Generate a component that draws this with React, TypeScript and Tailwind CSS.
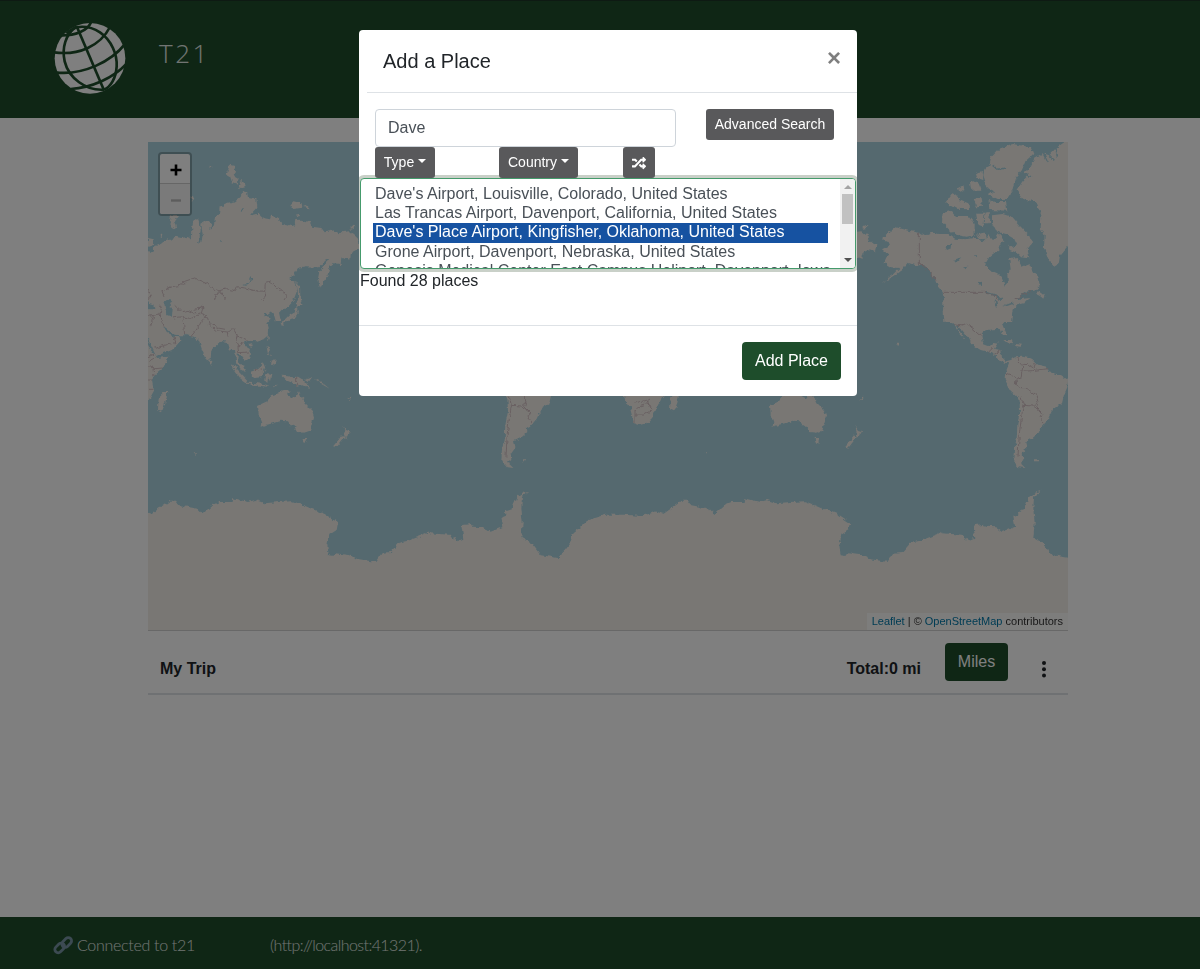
import React from "react";
import { FaRandom } from "react-icons/fa";

const LAND = "#f2efe9";
const SEA = "#aad3df";
const BORDER = "#d3c1c4";

function Globe() {
  return (
    <svg viewBox="162 67 216 216" className="h-[72px] w-[72px]" fill="none" stroke="#1e4d2b" strokeWidth="8">
      <circle cx="270" cy="176" r="106" fill="#fff" stroke="none" />
      <path d="M230 80L312 272" />
      <path d="M230 80C196 104 185 145 194 185C206 235 258 274 312 270" />
      <path d="M200 102C222 74 266 76 300 98C335 122 352 165 350 200C348 235 332 262 312 270" />
      <path d="M182 107C225 108 262 95 274 66" />
      <path d="M162 158C235 168 300 140 330 82" />
      <path d="M166 218C250 228 335 185 376 132" />
      <path d="M212 268C275 265 340 235 380 192" />
    </svg>
  );
}

function World() {
  return (
    <>
      <g transform="scale(.33333)">
        <path fill={LAND} d="M-90 340L0 325L15 330L22 312L40 305L44 298L65 290L82 284L100 288L118 285L132 290L133 250L139 228L155 235L158 262L155 285L150 308L160 300L164 280L160 245L175 236L190 243L187 262L198 250L200 230L213 213L215 196L240 182L262 178L278 165L283 149L298 154L300 168L325 171L328 195L303 222L330 215L345 228L366 232L370 220L378 224L392 226L400 250L414 246L420 254L440 246L442 234L460 233L485 240L492 254L520 258L530 271L560 265L570 277L584 270L604 268L626 286L631 305L608 320L610 336L580 350L578 366L556 364L546 372L538 402L525 420L516 437L510 410L514 390L530 370L544 350L530 357L518 372L500 374L475 373L450 378L438 396L424 411L442 420L448 445L435 478L415 500H-90Z" />
        <path fill={LAND} d="M236 97L244 68L259 72L264 90L258 98L269 105L267 126L252 120L246 103ZM272 128L280 114L293 128L286 138L274 137ZM427 188L436 178L461 184L463 197L436 201ZM465 195L480 190L488 199ZM443 218L453 216L456 222L446 224ZM78 262L65 240L70 218L90 219L78 235L84 258ZM0 288L17 292L18 308L0 314ZM445 418L456 430L457 465L463 486L448 491L450 455ZM608 253L618 248L622 255ZM38 280L44 274L40 292ZM130 160L138 166L132 180ZM180 76L187 74L186 79Z" />
        <path fill={SEA} d="M48 480L65 466L76 480L66 486L74 500L72 524L58 520L52 500ZM-60 480L0 474L4 486L22 492L15 502L-60 500ZM310 405L313 410L300 430L286 432L303 423ZM276 200L285 198L280 208ZM216 293L220 297L217 300Z" />
        <path fill="none" stroke={BORDER} strokeWidth="3" d="M48 462L42 448L70 434L100 430L110 418L140 408L178 424L190 438L215 446L205 458L198 475L165 488L150 500L132 492L110 486L80 490M215 446L235 440L262 446L268 434L290 438L320 446L350 448L354 458L345 474L325 480L300 494L270 488L240 480L225 462L215 446M350 448L352 424L368 420L385 436L418 458L402 484L390 500M0 444L10 460L0 475M78 490L100 510L120 505L140 515L165 488M140 515L128 500M198 475L188 490" />
      </g>
      <g transform="translate(0 158) scale(.33333)">
        <path fill={LAND} d="M-90 0H430L405 25L393 38L398 60L384 66L378 44L370 36L358 46L350 34L346 48L370 52L358 68L363 88L362 104L348 116L326 124L300 122L287 128L300 145L309 158L307 174L292 182L280 166L270 160L268 178L285 198L293 216L280 210L264 186L262 158L254 144L244 152L236 126L222 122L208 136L190 152L188 176L178 184L164 155L154 124L138 110L115 106L94 106L80 104L62 90L46 78L60 102L78 110L96 112L100 122L78 148L24 168L0 118L-90 80Z" />
        <path fill={LAND} d="M-120 90L-15 110L0 140L18 162L24 174L62 170L44 206L18 228L12 240L18 272L-6 315L-21 350L-36 368L-61 375L-78 370L-91 320L-106 295L-120 240ZM32 294L50 276L58 276L52 308L42 334L30 328ZM184 180L193 184L189 194L184 190ZM253 192L275 215L298 240L295 248L278 236L258 208ZM296 248L330 250L362 256L360 260L320 256L298 252ZM308 212L330 205L346 190L352 204L340 232L318 234L308 222ZM355 222L370 224L366 244L360 230L358 246L352 240ZM400 224L420 226L428 232L450 230L466 240L484 260L462 256L446 260L436 250L418 242ZM470 240L490 232L495 236L480 246ZM356 138L366 144L364 158L370 170L360 160ZM370 182L383 178L380 194L370 190ZM358 106L363 110L358 122ZM302 132L312 130L314 138L305 140ZM445 8L458 0L463 10L448 20ZM446 20L450 38L440 54L424 58L408 68L402 76L398 66L412 60L426 46L438 38ZM376 256L390 254L375 262Z" />
        <path fill={LAND} d="M330 315L358 302L372 286L392 280L402 270L426 272L420 286L440 296L450 274L458 290L466 296L472 310L492 330L498 350L486 392L468 398L450 396L438 376L428 376L420 364L398 362L374 370L352 376L338 380L340 366L332 345ZM464 414L478 414L474 428L466 426ZM586 378L594 390L606 394L600 404L594 416L588 404L590 394ZM582 406L590 412L572 434L562 446L556 438L568 424ZM137 460L144 460L142 465ZM598 298L606 292L604 300ZM500 236L520 246L545 266L520 252Z" />
        <path fill={SEA} d="M48 6L65 -6L76 6L66 12L74 26L72 50L58 46L52 26ZM-60 6L0 0L4 12L22 18L15 28L-60 26Z" />
        <path fill="none" stroke={BORDER} strokeWidth="3" d="M0 50L16 46L36 42L40 26L34 14M16 46L8 80M36 42L48 78M24 48L14 66L0 78M75 54L104 50L108 82L110 104M104 50L128 56L160 40L175 46L160 64L150 84L130 108M175 46L185 76L205 92L238 96L240 110M80 16L100 36L120 31L140 41L165 14M160 40L165 22L140 28M238 96L256 86L268 108L262 126L270 140L288 128M268 108L300 122M270 140L272 158L300 156M185 76L190 70L210 84L232 88M20 145L50 136L80 128M78 110L84 130M0 184L20 174M0 200L22 206L44 204M14 200L18 228M0 240L12 240M0 268H16M0 170L20 162M446 230V260M320 212L346 206M-75 370V330L-60 320L-30 300M-75 310L-40 300L-24 330L-50 345L-75 345" />
      </g>
      <g transform="translate(196 0) scale(.33333)">
        <path fill={LAND} d="M84 284L100 268L120 256L165 268L190 272L206 282L230 272L246 276L280 276L300 290L330 292L352 288L382 298L398 280L410 294L424 284L434 304L430 326L414 334L400 344L388 366L396 382L424 394L440 410L446 434L456 424L454 398L464 382L460 352L482 348L498 374L520 366L534 392L546 402L554 430L540 442L500 456L486 472L520 468L505 480L490 484L470 500L465 540H262L260 510L266 480L260 450L246 434L232 402L216 384L202 370L180 370L155 362L140 380L118 398L76 424L112 396L130 378L106 376L86 364L98 338L78 322L102 310L98 300L82 296ZM0 270L24 282L46 302L64 310L60 328L40 322L18 334L16 350L0 344ZM20 252L34 250L32 258L20 260ZM540 456L550 446L566 460L562 470L552 462Z" />
        <path fill={LAND} d="M406 46L430 20L470 6L524 16L532 36L508 58L498 84L476 112L470 144L452 170L424 172L398 160L414 148L394 136L382 100L386 80L400 72ZM268 182L288 154L300 158L310 172L340 184L342 202L300 200ZM260 210L285 204L300 222L336 222L356 246L356 278L332 284L298 278L268 252L258 240ZM342 120L356 118L370 130L376 146L356 146L344 136ZM306 138L322 130L326 144L310 150ZM398 174L416 180L450 180L454 206L400 204ZM354 172L374 168L378 194L362 196ZM360 212L386 212L382 256L366 250ZM408 220L440 216L470 226L494 254L520 282L528 304L514 322L520 346L492 342L462 318L484 310L474 290L450 276L420 268L408 244ZM428 274L446 294L430 306L418 290ZM388 214L402 214L398 244L386 244ZM360 92L380 88L382 114L364 108ZM364 276L384 272L390 290L372 292ZM458 308L472 318L476 330L456 322Z" />
        <path fill={LAND} d="M482 146L498 120L514 102L504 92L522 76L536 48L560 34L580 40L600 18L640 -10H780L740 220L660 280L632 316L612 340L608 366L594 374L576 352L564 316L566 280L554 258L556 220L540 180L498 170Z" />
        <path fill={SEA} d="M265 314L286 304L284 318L270 324ZM292 354L316 346L300 362ZM318 376L334 374L328 382ZM364 416L378 420L378 432L370 430ZM354 340L362 340L358 346Z" />
        <path fill="none" stroke={SEA} strokeWidth="5" d="M392 452L412 458L424 462L446 482M418 476L422 496M428 464L440 474M436 496L462 486M470 486L498 464L516 448L548 444M410 70L424 82L450 78M600 18L604 44M580 40L592 52M562 34L574 60M505 95L528 104" />
        <path fill="none" stroke={BORDER} strokeWidth="3" d="M190 272V366L220 386L240 416M262 451H386L420 462L440 495L462 486L500 460L526 448" />
      </g>
      <g transform="translate(196 158) scale(.33333)">
        <path fill={LAND} d="M262 0H500L470 30L464 52L448 66L440 76L452 106L440 104L434 86L410 88L382 92L376 108L382 132L398 138L412 126L426 128L414 146L436 150L438 172L450 184L464 180L480 172L500 170L528 176L546 194L572 200L578 216L616 226L636 240L634 262L624 284L618 310L592 326L578 356L558 380L548 386L550 396L530 414L510 424L514 440L500 460L502 480L492 488L508 504L488 502L472 482L474 446L482 418L484 376L492 330L490 294L466 274L446 238L448 218L460 190L446 188L428 180L420 168L398 156L374 150L348 134L338 114L318 90L306 76L300 78L326 116L312 104L294 74L272 54L262 28ZM442 120L466 120L472 130L450 126ZM478 132L498 134L494 140L478 138ZM534 478H546V484H534ZM120 126L132 132L126 138ZM16 292L22 290L20 300Z" />
        <path fill="none" stroke={SEA} strokeWidth="5" d="M418 2L422 22M440 20L470 10" />
        <path fill="none" stroke={BORDER} strokeWidth="3" d="M292 74L320 78L334 72L350 84L374 106M398 156L412 142M414 162L434 150M486 174L484 190L512 194L530 204L536 190M500 196L498 214L530 212L578 206M450 222L468 228L494 238L498 214M480 238L478 254L494 266L514 266L540 286L546 306L532 318L502 316L496 290M546 306L542 320L560 338L552 354L564 370M502 316L496 356L490 400L486 470M532 318L548 330L560 338" />
      </g>
    </>
  );
}

function Antarctica() {
  return (
    <path fill={LAND} d="M-30 525L0 537L52 546L72 518L98 516L122 488L150 482L205 462L209 452L215 460L275 464L288 484L291 472L298 484L316 476L310 436L338 432L344 440L376 442L396 456L436 440L430 412L445 406L444 394L462 388L478 350L496 338L514 332L492 350L490 385L494 430L490 474L522 492L548 526L600 534L636 488L644 462L662 448L690 420L745 404L800 404L850 408L880 400L892 394L916 402L950 378L972 362L990 362L1000 376L1054 386L1070 402L1100 374L1120 366L1160 366L1162 354L1172 358L1206 366L1228 360L1256 370L1298 366L1340 364L1372 376L1400 388L1436 402L1476 428L1472 450L1450 464L1444 496L1448 526L1462 528L1468 520L1506 525L1536 537V760H-30Z" />
  );
}

function WorldMap() {
  return (
    <svg viewBox="0 0 920 488" className="block h-[488px] w-[920px]">
      <defs>
        <filter id="coastline" x="-20" y="-20" width="960" height="528" filterUnits="userSpaceOnUse" colorInterpolationFilters="sRGB">
          <feTurbulence type="fractalNoise" baseFrequency="0.22" numOctaves="2" seed="4" />
          <feDisplacementMap in="SourceGraphic" scale="5" xChannelSelector="R" yChannelSelector="G" />
        </filter>
      </defs>
      <rect width="920" height="488" fill={SEA} />
      <g filter="url(#coastline)">
        <World />
        <g transform="translate(512 0)">
          <World />
        </g>
        {[-302, 210, 722].map((x) => (
          <g key={x} transform={`translate(${x} 238) scale(.33333)`}>
            <Antarctica />
          </g>
        ))}
      </g>
    </svg>
  );
}

const places = [
  "Dave's Airport, Louisville, Colorado, United States",
  "Las Trancas Airport, Davenport, California, United States",
  "Dave's Place Airport, Kingfisher, Oklahoma, United States",
  "Grone Airport, Davenport, Nebraska, United States",
  "Genesis Medical Center East Campus Heliport, Davenport, Iowa",
];

function Caret() {
  return <span className="ml-1 inline-block border-x-4 border-t-4 border-x-transparent border-t-white align-[3.6px]" />;
}

function PlaceDialog() {
  return (
    <div className="h-[366px] w-[498px] overflow-hidden rounded-[4px] bg-white text-[#212529]">
      <div className="ml-2 flex h-[63px] items-start justify-between border-b border-[#dee2e6] pl-4 pr-4">
        <h5 className="pt-4 text-[20px] leading-[30px]">Add a Place</h5>
        <button className="pt-[12px] text-[24px] leading-[32px] font-bold text-[#7f7f7f]">×</button>
      </div>
      <div className="flex items-start px-4 pt-4">
        <input readOnly value="Dave" className="h-[38px] w-[301px] rounded-[4px] border border-[#ced4da] px-3 text-[16px] text-[#495057]" />
        <button className="ml-[30px] h-[31px] w-[128px] rounded-[3px] bg-[#59595b] text-[14px] text-white">Advanced Search</button>
      </div>
      <div className="flex px-4 text-[14px] text-white">
        <div className="w-[124px]"><button className="h-[31px] w-[60px] rounded-[3px] bg-[#59595b]">Type<Caret /></button></div>
        <div className="w-[124px]"><button className="h-[31px] w-[79px] rounded-[3px] bg-[#59595b]">Country<Caret /></button></div>
        <button className="flex h-[31px] w-[32px] items-center justify-center rounded-[3px] bg-[#59595b]"><FaRandom size={14} /></button>
      </div>
      <div className="ml-px flex h-[91px] w-[496px] justify-between overflow-hidden rounded-[4px] border border-[#459b6c] bg-white shadow-[0_0_0_3px_#c9d0c8]">
        <ul className="ml-3 w-[455px] pt-[6px] text-[16px] whitespace-nowrap text-[#495057]">
          {places.map((place, i) => (
            <li key={place} className={i === 2 ? "h-[20px] bg-[#1652a1] pl-0.5 leading-[18px] text-white" : "h-[19px] pl-0.5 leading-[18px]"}>{place}</li>
          ))}
        </ul>
        <div className="flex w-[15px] flex-col items-center bg-[#f1f1f1]">
          <span className="mt-1.5 border-x-4 border-b-4 border-x-transparent border-b-[#a3a3a3]" />
          <span className="mt-[5px] h-[30px] w-[11px] bg-[#c1c1c1]" />
          <span className="mt-auto mb-1.5 border-x-4 border-t-4 border-x-transparent border-t-[#505050]" />
        </div>
      </div>
      <p className="h-[56px] pl-px text-[16px] leading-[24px]">Found 28 places</p>
      <div className="flex justify-end border-t border-[#dee2e6] p-4">
        <button className="h-[38px] w-[99px] rounded-[4px] bg-[#1e4d2b] text-[16px] text-white">Add Place</button>
      </div>
    </div>
  );
}

export default function App() {
  return (
    <div className="relative h-[969px] w-[1200px] overflow-hidden bg-white font-['Liberation_Sans',sans-serif] text-[#212529]">
      <div className="flex h-full flex-col">
        <header className="flex h-[118px] shrink-0 border-t border-[#1c3527] bg-[#1e4d2b] pl-[54px]">
          <div className="pt-[21px]"><Globe /></div>
          <h1 className="ml-[33px] pt-[34px] font-['Open_Sans',sans-serif] text-[26px] leading-[36px] font-light tracking-[2.5px] text-[#e4ebe6]">T21</h1>
        </header>
        <main className="ml-[148px] w-[920px] grow pt-6">
          <div className="relative h-[489px] border-b border-[#d0d0d0]">
            <WorldMap />
            <div className="absolute top-[10px] left-[10px] w-[34px] rounded-[4px] border-2 border-black/25 bg-white bg-clip-padding text-center font-bold">
              <div className="flex h-[30px] items-center justify-center border-b border-[#ccc] pt-[3px] pl-px text-black">
                <svg width="12" height="12" stroke="currentColor" strokeWidth="2.6"><path d="M.5 6H11.5M6 .5V11.5" /></svg>
              </div>
              <div className="flex h-[30px] items-center justify-center rounded-b-[2px] bg-[#f4f4f4] pl-px text-[#bbb]">
                <svg width="12" height="12" stroke="currentColor" strokeWidth="2.4"><path d="M1 7.5H11" /></svg>
              </div>
            </div>
            <div className="absolute right-0 bottom-0 bg-white/70 px-[5px] text-[11px] leading-[17px] whitespace-nowrap text-[#333]">
              <span className="text-[#0078a8]">Leaflet</span> | © <span className="text-[#0078a8]">OpenStreetMap</span> contributors
            </div>
          </div>
          <div className="flex h-[64px] items-start border-b-2 border-[#dee2e6] px-3 text-[16px] font-bold">
            <span className="pt-[26px] leading-6">My Trip</span>
            <span className="ml-auto pt-[26px] leading-6">Total:0 mi</span>
            <button className="mt-3 ml-6 h-[38px] w-[63px] rounded-[4px] bg-[#1e4d2b] font-normal text-white">Miles</button>
            <svg className="mt-[30px] mr-[9px] ml-[33px]" width="6" height="17" fill="#212529">
              <circle cx="3" cy="2" r="2" /><circle cx="3" cy="8.3" r="2" /><circle cx="3" cy="14.6" r="2" />
            </svg>
          </div>
        </main>
        <footer className="flex h-[52px] shrink-0 items-center bg-[#1e4d2b] pt-1 pl-[53px] font-['Lato',sans-serif] text-[16px] font-light text-[#e4ebe6]">
          <svg width="20" height="20" viewBox="0 0 20 20" fill="none" stroke="#7894a4" strokeWidth="2.8">
            <rect x="8.2" y="4.2" width="11" height="6.6" rx="3.3" transform="rotate(-45 13.7 7.5)" />
            <rect x="1.2" y="9.6" width="11" height="6.6" rx="3.3" transform="rotate(-45 6.7 12.9)" />
          </svg>
          <span className="ml-1 w-[193px] tracking-[-0.3px]">Connected to t21</span>
          <span className="tracking-[-0.58px]">(http://localhost:41321).</span>
        </footer>
      </div>
      <div className="absolute inset-0 flex items-start justify-center bg-black/50 pt-[30px] pl-4">
        <PlaceDialog />
      </div>
    </div>
  );
}
